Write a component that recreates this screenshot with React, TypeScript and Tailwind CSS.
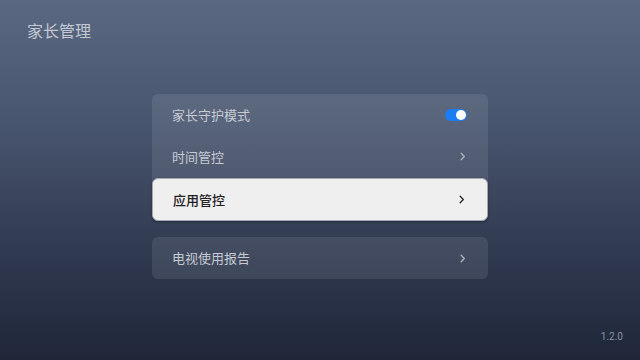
import React from "react";

const Chevron = ({ color }: { color: string }) => (
  <svg width="6" height="9" viewBox="0 0 6 9" fill="none">
    <path d="M1.2 1.3 L4.3 4.5 L1.2 7.7" stroke={color} strokeWidth="1.4" strokeLinecap="round" strokeLinejoin="round" />
  </svg>
);

export default function App() {
  const font = { fontFamily: '"Noto Sans CJK SC", "Noto Sans", sans-serif' };
  return (
    <div
      className="w-[640px] h-[360px] relative overflow-hidden bg-[linear-gradient(180deg,#5b6882_0%,#48556e_35%,#303a50_70%,#1f2739_100%)]"
      style={font}
    >
      <div className="pl-[27px] pt-[18px] text-[16px] leading-[24px] text-[#c3c9d3]">家长管理</div>

      <div className="flex flex-col items-center mt-[52px]">
        <div className="w-[336px] rounded-[6px] bg-[rgba(255,255,255,0.09)]">
          <div className="h-[42px] flex items-center justify-between pl-[20px] pr-[21px] pb-[1px]">
            <span className="text-[13px] leading-[18px] text-[#c6cbd4]">家长守护模式</span>
            <div className="w-[22px] h-[12px] rounded-full bg-[#1b7df5] relative">
              <div className="absolute right-[1px] top-[1px] w-[10px] h-[10px] rounded-full bg-white" />
            </div>
          </div>
          <div className="h-[42px] flex items-center justify-between pl-[20px] pr-[22px] pb-[1px]">
            <span className="text-[13px] leading-[18px] text-[#c6cbd4]">时间管控</span>
            <Chevron color="#aab1bd" />
          </div>
          <div className="h-[43px] flex items-center justify-between pl-[20px] pr-[22px] rounded-[6px] bg-[#efefef] border-[1.5px] border-[#a3a9b4] shadow-[0_1px_3px_rgba(0,0,0,0.35)]">
            <span className="text-[13px] leading-[18px] font-medium text-[#1f2023]">应用管控</span>
            <Chevron color="#2a2c31" />
          </div>
        </div>

        <div className="w-[336px] h-[42px] mt-[16px] rounded-[6px] bg-[rgba(255,255,255,0.09)] flex items-center justify-between pl-[20px] pr-[22px]">
          <span className="text-[13px] leading-[18px] text-[#c6cbd4]">电视使用报告</span>
          <Chevron color="#aab1bd" />
        </div>
      </div>

      <div
        className="absolute right-[17px] bottom-[16px] text-[10px] text-[#8a93a3]"
        style={{ fontFamily: '"Roboto", sans-serif' }}
      >
        1.2.0
      </div>
    </div>
  );
}
